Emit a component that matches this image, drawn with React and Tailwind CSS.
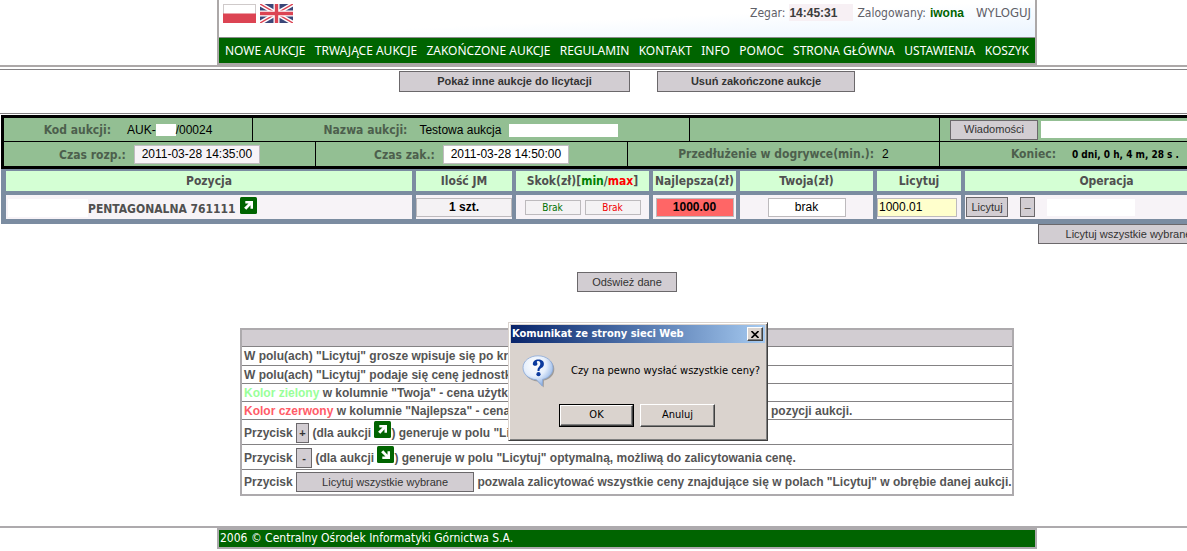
const tahoma = "font-['DejaVu_Sans_Condensed','DejaVu_Sans',sans-serif]";

function GreyButton({ className = "", children, ...rest }) {
  return (
    <button
      type="button"
      className={`border border-[#6b686b] bg-[#d2cdd2] text-center text-[11px] whitespace-nowrap text-[#333] ${className}`}
      {...rest}
    >
      {children}
    </button>
  );
}

function ArrowIcon({ down = false }) {
  return (
    <svg
      viewBox="0 0 17 17"
      className="inline-block size-[17px] align-[-1px]"
      role="img"
      aria-label={down ? "malejąca" : "rosnąca"}
    >
      <rect width="17" height="17" rx="1.5" fill="#006400" />
      <g transform={down ? "matrix(1 0 0 -1 0 17)" : undefined}>
        <path d="M5.300 4H13v7.700h-2.500V8.300L6.300 12.800 4.100 10.700l4.400-4.200H5.300z" fill="#fff" />
      </g>
    </svg>
  );
}

function PolishFlag() {
  return (
    <svg viewBox="0 0 33 19" className="h-[19px] w-[33px]" role="img" aria-label="Polski">
      <rect x="0.5" y="0.5" width="32" height="18" fill="#fff" stroke="#cfcaca" />
      <rect y="9.5" width="33" height="9.5" fill="#dc4453" />
    </svg>
  );
}

function BritishFlag() {
  return (
    <svg viewBox="0 0 33 19" className="h-[19px] w-[33px]" role="img" aria-label="English">
      <rect width="33" height="19" fill="#3b4678" />
      <path d="M0 0L33 19M33 0L0 19" stroke="#fff" strokeWidth="4.4" />
      <path d="M0 0L33 19M33 0L0 19" stroke="#dc4453" strokeWidth="1.5" />
      <path d="M16.5 0v19M0 9.5h33" stroke="#fff" strokeWidth="6" />
      <path d="M16.5 0v19M0 9.5h33" stroke="#dc4453" strokeWidth="3.4" />
    </svg>
  );
}

function QuestionIcon() {
  return (
    <svg viewBox="0 0 33 33" className="size-[33px] shrink-0" aria-hidden="true">
      <defs>
        <radialGradient id="bubble" cx="0.4" cy="0.3" r="0.75">
          <stop offset="0" stopColor="#fff" />
          <stop offset="0.5" stopColor="#e6effc" />
          <stop offset="1" stopColor="#7ba4e0" />
        </radialGradient>
      </defs>
      <path
        d="M17 2.2c8.600 0 15.300 5.100 15.300 11.800 0 6-4.300 10.400-10.400 11.600l-.2 6.800-6-5.900C7.300 25.600 2 20.500 2 14 2 7.300 8.600 2.200 17 2.200z"
        fill="#777"
        opacity="0.6"
      />
      <path
        d="M16 .8c8.400 0 15 5.200 15 11.900 0 5.900-4.300 10.400-10.400 11.700l-.3 6.700-5.800-6.300C6.300 24.100 1 19 1 12.700 1 6 7.600.8 16 .8z"
        fill="url(#bubble)"
        stroke="#8ba9d8"
        strokeWidth="0.8"
      />
      <path
        d="M10.800 9.300c0-3 2.200-4.900 5.600-4.900 3.300 0 5.500 1.700 5.500 4.500 0 2.100-1.100 3.200-2.700 4.200-1.300.9-1.700 1.500-1.700 3h-2c-.1-2.200.4-3.200 1.500-4.400.9-1 1.300-1.700 1.300-2.900 0-1.700-.7-2.700-2-2.700-1 0-1.500.4-1.500.9 0 .7.600.9.600 1.900 0 1.100-.9 1.900-2.200 1.900-1.400 0-2.400-.6-2.400-1.500z"
        fill="#0b3a9e"
      />
      <circle cx="16.500" cy="19.200" r="2.100" fill="#0b3a9e" />
    </svg>
  );
}

const nav = [
  "NOWE AUKCJE",
  "TRWAJĄCE AUKCJE",
  "ZAKOŃCZONE AUKCJE",
  "REGULAMIN",
  "KONTAKT",
  "INFO",
  "POMOC",
  "STRONA GŁÓWNA",
  "USTAWIENIA",
  "KOSZYK",
];

function Header() {
  return (
    <header className="border-b-2 border-[#aca8a8]">
      <div className="mx-auto w-[820px] border-2 border-t-0 border-[#aca8a8]">
        <div className="flex h-[37px] items-start bg-linear-to-br from-white from-50% to-[#eaf4ff] pt-1 pr-1 pl-1">
          <a href="#pl"><PolishFlag /></a>
          <a href="#en" className="ml-1"><BritishFlag /></a>
          <div className={`ml-auto flex items-center text-xs text-[#606068] ${tahoma}`}>
            <label htmlFor="clock">Zegar:</label>
            <input
              id="clock"
              readOnly
              value="14:45:31"
              className="ml-1 h-[17px] w-16 bg-[#f7f0f4] font-['Liberation_Sans',sans-serif] font-bold text-[#3c3c3c]"
            />
            <span className="ml-1">Zalogowany:</span>
            <b className="ml-1 font-['Liberation_Sans',sans-serif] text-[#006400]">iwona</b>
            <a href="#logout" className="ml-3 text-[13px]">WYLOGUJ</a>
          </div>
        </div>
        <nav className="flex h-[26px] items-center justify-between border-t border-[#8c8c8c] bg-[#006400] px-1.5 font-['Noto_Sans',sans-serif] text-xs text-white">
          {nav.map((item) => (
            <a key={item} href="#nav" className="whitespace-nowrap">{item}</a>
          ))}
        </nav>
      </div>
    </header>
  );
}

const cell = "border border-black p-0 text-center align-middle whitespace-nowrap";
const label = `text-xs font-bold text-[#4d5f4d] ${tahoma}`;
const dateBox = "ml-2 h-[19px] w-[126px] border border-[#c0bcc0] text-center text-xs";

function AuctionInfo() {
  return (
    <table className="w-full table-fixed border-collapse border-[3px] border-black bg-[#93bf93] text-xs text-black">
      <colgroup>
        <col className="w-[250px]" />
        <col className="w-[63px]" />
        <col className="w-[312px]" />
        <col className="w-[62px]" />
        <col className="w-[250px]" />
        <col />
      </colgroup>
      <tbody>
        <tr className="h-[25px]">
          <td className={cell}>
            <span className={label}>Kod aukcji:</span>
            <span className="ml-4">AUK-<span className="inline-block h-3 w-5 bg-white align-middle" />/00024</span>
          </td>
          <td className={cell} colSpan={3}>
            <span className={label}>Nazwa aukcji:</span>
            <span className="ml-3">Testowa aukcja</span>
            <span className="ml-2 inline-block h-[13px] w-[109px] bg-white align-middle" />
          </td>
          <td className={cell} />
          <td className={cell}>
            <div className="flex items-center pl-2.5">
              <GreyButton className="h-5 w-[88px]">Wiadomości</GreyButton>
              <span className="ml-[3px] h-[17px] flex-1 bg-white" />
            </div>
          </td>
        </tr>
        <tr className="h-[26px]">
          <td className={cell} colSpan={2}>
            <label htmlFor="start" className={label}>Czas rozp.:</label>
            <input id="start" readOnly value="2011-03-28 14:35:00" className={`${dateBox} bg-[#f7f3f7]`} />
          </td>
          <td className={cell}>
            <label htmlFor="end" className={label}>Czas zak.:</label>
            <input id="end" readOnly value="2011-03-28 14:50:00" className={`${dateBox} bg-white`} />
          </td>
          <td className={cell} colSpan={2}>
            <span className={label}>Przedłużenie w dogrywce(min.):</span>
            <span className="ml-2">2</span>
          </td>
          <td className={cell}>
            <span className={label}>Koniec:</span>
            <span className={`ml-4 text-[10px] font-bold ${tahoma}`}>0 dni, 0 h, 4 m, 28 s .</span>
          </td>
        </tr>
      </tbody>
    </table>
  );
}

const th = "h-6 border-2 border-[#7b8ca1] bg-[#d4ffd4] p-0 text-center whitespace-nowrap";
const td = "h-7 border-2 border-[#7b8ca1] bg-[#f7f3f7] p-0 text-center whitespace-nowrap";
const field = "border border-[#bdbabd] text-center text-xs text-black";

function Positions() {
  return (
    <table className="w-full table-fixed border-separate border-spacing-0 border-x-[3px] border-b-[3px] border-[#7b8ca1] text-xs text-[#505050]">
      <colgroup>
        <col className="w-[410px]" />
        <col className="w-[100px]" />
        <col className="w-[137px]" />
        <col className="w-[87px]" />
        <col className="w-[137px]" />
        <col className="w-[88px]" />
        <col />
      </colgroup>
      <thead className={tahoma}>
        <tr>
          <th className={th}>Pozycja</th>
          <th className={th}>Ilość JM</th>
          <th className={th}>
            Skok(zł)[<span className="text-[#008000]">min</span>/<span className="text-[#ff0000]">max</span>]
          </th>
          <th className={th}>Najlepsza(zł)</th>
          <th className={th}>Twoja(zł)</th>
          <th className={th}>Licytuj</th>
          <th className={th}>Operacja</th>
        </tr>
      </thead>
      <tbody>
        <tr>
          <td className={td}>
            <div className={`flex items-end gap-1 font-bold ${tahoma}`}>
              <span className="ml-0.5 -mr-1 h-[18px] w-20 bg-white" />
              <span>PENTAGONALNA 761111</span>
              <span className="self-start"><ArrowIcon /></span>
            </div>
          </td>
          <td className={td}>
            <input aria-label="Ilość" readOnly value="1 szt." className={`${field} h-[19px] w-full bg-[#f4f2f4] font-bold`} />
          </td>
          <td className={td}>
            <div className="flex justify-center gap-1">
              <input aria-label="Skok min" readOnly value="Brak" className={`h-[15px] w-14 border border-[#bdbabd] bg-[#f4f2f4] text-center text-[10px] text-[#007000] ${tahoma}`} />
              <input aria-label="Skok max" readOnly value="Brak" className={`h-[15px] w-14 border border-[#bdbabd] bg-[#f4f2f4] text-center text-[10px] text-[#f00000] ${tahoma}`} />
            </div>
          </td>
          <td className={td}>
            <input aria-label="Najlepsza" readOnly value="1000.00" className={`${field} h-[19px] w-[78px] bg-[#ff6666] font-bold`} />
          </td>
          <td className={td}>
            <input aria-label="Twoja" readOnly value="brak" className={`${field} h-[19px] w-[78px] bg-white`} />
          </td>
          <td className={`${td} text-left`}>
            <input aria-label="Licytuj" defaultValue="1000.01" className="h-[19px] w-20 border border-[#bdbabd] bg-[#ffffcc] px-px text-xs text-black" />
          </td>
          <td className={td}>
            <div className="flex items-center pl-px">
              <GreyButton className="h-5 w-[42px]">Licytuj</GreyButton>
              <GreyButton className="ml-3 h-5 w-[15px]" aria-label="Zmniejsz">–</GreyButton>
              <span className="ml-3 h-[17px] w-[88px] bg-white" />
            </div>
          </td>
        </tr>
      </tbody>
    </table>
  );
}

const row = "border-t border-[#848284] py-0 pr-0 pl-0.5 whitespace-nowrap";

function Legend() {
  return (
    <table className="mx-auto w-[774px] border-separate border-spacing-0 border-2 border-[#adaaad] font-['Liberation_Sans',sans-serif] text-xs font-bold text-[#555]">
      <thead>
        <tr><th className="h-4 bg-[#d2cdd2] p-0" aria-label="Legenda" /></tr>
      </thead>
      <tbody>
        <tr><td className={`h-[19px] ${row}`}>W polu(ach) "Licytuj" grosze wpisuje się po kropce.</td></tr>
        <tr><td className={`h-[18px] ${row}`}>W polu(ach) "Licytuj" podaje się cenę jednostkową.</td></tr>
        <tr>
          <td className={`h-[18px] ${row}`}>
            <span className="text-[#99ff99]">Kolor zielony</span> w kolumnie "Twoja" - cena użytkownika.
          </td>
        </tr>
        <tr>
          <td className={`h-[18px] ${row}`}>
            <div className="flex">
              <span className="w-[527px]"><span className="text-[#ff5c68]">Kolor czerwony</span> w kolumnie "Najlepsza" - cena</span>
              <span>pozycji aukcji.</span>
            </div>
          </td>
        </tr>
        <tr>
          <td className={`h-[25px] ${row}`}>
            Przycisk <GreyButton className="h-5 w-[13px]">+</GreyButton> (dla aukcji <ArrowIcon />) generuje w polu "Licytuj" minimalną, możliwą cenę.
          </td>
        </tr>
        <tr>
          <td className={`h-[25px] ${row}`}>
            Przycisk <GreyButton className="h-5 w-4">-</GreyButton> (dla aukcji <ArrowIcon down />) generuje w polu "Licytuj" optymalną, możliwą do zalicytowania cenę.
          </td>
        </tr>
        <tr>
          <td className={`h-[25px] ${row}`}>
            Przycisk <GreyButton className="h-5 w-[178px] font-normal">Licytuj wszystkie wybrane</GreyButton> pozwala zalicytować wszystkie ceny znajdujące się w polach "Licytuj" w obrębie danej aukcji.
          </td>
        </tr>
      </tbody>
    </table>
  );
}

const raised = "border border-t-white border-l-white border-r-[#404040] border-b-[#404040] bg-[#dad3ce] shadow-[inset_-1px_-1px_0_#808080]";

function ConfirmDialog() {
  return (
    <div
      role="dialog"
      aria-labelledby="dialog-title"
      className={`absolute top-[322px] left-[508px] h-[119px] w-[260px] border border-[#dad3ce] border-r-[#404040] border-b-[#404040] bg-[#dad3ce] p-0.5 text-[11px] text-black shadow-[inset_1px_1px_0_#fff,inset_-1px_-1px_0_#808080] ${tahoma}`}
    >
      <div className="flex h-[18px] items-center bg-linear-to-r from-[#0a246a] to-[#a6caf0] pr-0.5 pl-px text-white">
        <h2 id="dialog-title" className="flex-1 font-bold whitespace-nowrap">Komunikat ze strony sieci Web</h2>
        <button
          type="button"
          aria-label="Zamknij"
          className={`flex h-3.5 w-4 items-center justify-center ${raised}`}
        >
          <svg viewBox="0 0 8 7" className="h-[7px] w-2" aria-hidden="true">
            <path d="M0.500 0l7 7M7.500 0l-7 7" stroke="#000" strokeWidth="1.600" />
          </svg>
        </button>
      </div>
      <div className="flex items-center gap-4 pt-3 pl-[11px]">
        <QuestionIcon />
        <p className="whitespace-nowrap">Czy na pewno wysłać wszystkie ceny?</p>
      </div>
      <div className="flex justify-center gap-1.5 pt-4 pr-0.5">
        <div className="border border-black">
          <button type="button" className={`block h-[21px] w-[73px] ${raised}`}>OK</button>
        </div>
        <button type="button" className={`h-[23px] w-[75px] ${raised}`}>Anuluj</button>
      </div>
    </div>
  );
}

export default function App() {
  return (
    <div className="relative overflow-hidden bg-white font-['Liberation_Sans',sans-serif]">
      <div className="min-w-[1254px]">
        <Header />
        <main>
          <div className="mt-0.5 flex justify-center gap-[27px] border-t border-[#848284] pt-px">
            <GreyButton className="h-[21px] w-[231px] font-bold">Pokaż inne aukcje do licytacji</GreyButton>
            <GreyButton className="h-[21px] w-[198px] font-bold">Usuń zakończone aukcje</GreyButton>
          </div>
          <div className="mt-[21px] border-t border-[#848284] px-px pt-px">
            <AuctionInfo />
            <Positions />
          </div>
          <div className="flex justify-end pr-[35px]">
            <GreyButton className="h-5 w-[181px]">Licytuj wszystkie wybrane</GreyButton>
          </div>
          <div className="mt-7 mb-9 flex justify-center">
            <GreyButton className="h-5 w-[100px]">Odśwież dane</GreyButton>
          </div>
          <Legend />
        </main>
        <footer className="mt-[30px] border-t-2 border-[#adaaad]">
          <div className={`mx-auto h-[21px] w-[820px] border-2 border-[#adaaad] bg-[#006400] px-px text-xs text-white ${tahoma}`}>
            2006 © Centralny Ośrodek Informatyki Górnictwa S.A.
          </div>
        </footer>
      </div>
      <ConfirmDialog />
    </div>
  );
}
